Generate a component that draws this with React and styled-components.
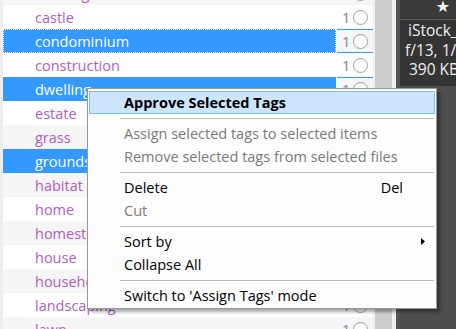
import React from 'react'
import styled, { createGlobalStyle } from 'styled-components'

const Global = createGlobalStyle`
  html, body { margin: 0; padding: 0; background: #4e4e4e; }
  body { font-family: "Open Sans", "Noto Sans", sans-serif; }
`

const Screen = styled.div`
  width: 456px;
  height: 329px;
  overflow: hidden;
  display: flex;
  position: relative;
  background: #4e4e4e;
`

const Edge = styled.div`
  width: 3px;
  background: #eeeeee;
`

const List = styled.div`
  width: 370px;
  margin-top: -19px;
  display: flex;
  flex-direction: column;
  background: #ffffff;
`

const Row = styled.div`
  display: flex;
  height: 24px;
  flex-shrink: 0;
  background: ${p => (p.$odd ? '#ffffff' : '#f5f5f5')};
`

const Name = styled.div`
  width: 333px;
  box-sizing: border-box;
  padding-left: 32px;
  display: flex;
  align-items: center;
  font-size: 14.5px;
  color: ${p => (p.$sel ? '#ffffff' : '#b65ac6')};
  background: ${p => (p.$sel ? '#3399ff' : 'transparent')};
  outline: ${p => (p.$focus ? '1px dotted #ffffff' : 'none')};
  outline-offset: -1px;
  white-space: nowrap;
`

const Count = styled.div`
  width: 36px;
  margin-left: 1px;
  box-sizing: border-box;
  display: flex;
  align-items: center;
  padding-left: 5px;
  gap: 3px;
  font-size: 14.5px;
  color: #7088a8;
  border-top: 1px solid ${p => (p.$sel ? '#3399ff' : 'transparent')};
  border-bottom: 1px solid ${p => (p.$sel ? '#3399ff' : 'transparent')};
`

const Circle = styled.span`
  width: 13px;
  height: 13px;
  border-radius: 50%;
  border: 1px solid #a0a0a0;
  background: #ffffff;
  flex-shrink: 0;
`

const Scroll = styled.div`
  display: flex;
`

const Gutter = styled.div`
  width: ${p => p.$w}px;
  background: ${p => p.$c};
`

const Panel = styled.div`
  width: 56px;
  display: flex;
  flex-direction: column;
  background: #4e4e4e;
  color: #eeeeee;
`

const Header = styled.div`
  height: 19px;
  background: #3a3a3a;
  border-bottom: 1px solid #575757;
  display: flex;
  justify-content: flex-end;
  align-items: flex-start;
  padding-right: 6px;
  font-family: "DejaVu Sans", sans-serif;
  font-size: 16px;
  line-height: 14px;
  color: #ffffff;
`

const Info = styled.div`
  height: 66px;
  background: #343434;
  padding: 1px 0 0 8px;
  box-sizing: border-box;
  font-size: 15.5px;
  line-height: 19.5px;
  white-space: nowrap;
  overflow: hidden;
`

const InfoLine = styled.div`
  margin-left: ${p => p.$x || 0}px;
`

const Menu = styled.div`
  position: absolute;
  left: 87px;
  top: 88px;
  width: 350px;
  box-sizing: border-box;
  border: 1px solid #979797;
  background: #fdfdfd;
  padding: 2px 1px 1px;
  box-shadow: 3px 3px 3px rgba(0, 0, 0, 0.35);
  font-size: 14.5px;
`

const Item = styled.div`
  height: 23px;
  box-sizing: border-box;
  display: flex;
  align-items: center;
  padding-left: ${p => (p.$hot ? 34 : 35)}px;
  color: ${p => (p.$off ? '#7a7a7a' : '#000000')};
  font-weight: ${p => (p.$bold ? 700 : 400)};
  background: ${p => (p.$hot ? '#cce4fc' : 'transparent')};
  border: ${p => (p.$hot ? '1px solid #86bbee' : 'none')};
  white-space: nowrap;
`

const Label = styled.span`
  flex: 1;
`

const Trail = styled.span`
  margin-right: ${p => p.$r}px;
  display: flex;
  align-items: center;
`

const Sep = styled.div`
  height: 8px;
  display: flex;
  align-items: center;
  padding-left: 31px;
  padding-right: 1px;
  &::after {
    content: '';
    flex: 1;
    height: 1px;
    background: #bdbdbd;
  }
`

const tags = [
  'building', 'castle', 'condominium', 'construction', 'dwelling', 'estate', 'grass',
  'grounds', 'habitat', 'home', 'homestead', 'house', 'household', 'landscaping', 'lawn'
]
const selected = ['condominium', 'dwelling', 'grounds']

const App = () => {
  return (
    <>
      <Global />
      <Screen>
        <Edge />
        <List>
          {tags.map((t, i) => {
            const sel = selected.includes(t)
            return (
              <Row key={t} $odd={i % 2 === 1}>
                <Name $sel={sel} $focus={t === 'condominium'}>{t}</Name>
                <Count $sel={sel}>1<Circle /></Count>
              </Row>
            )
          })}
        </List>
        <Scroll>
          <Gutter $w={2} $c="#f0f0f0" />
          <Gutter $w={17} $c="#cdcdcd" />
          <Gutter $w={4} $c="#f0f0f0" />
          <Gutter $w={4} $c="#555555" />
        </Scroll>
        <Panel>
          <Header>★</Header>
          <Info>
            <InfoLine $x={0}>iStock_000012345</InfoLine>
            <InfoLine $x={-3}>f/13, 1/250</InfoLine>
            <InfoLine $x={1}>390 KB, 2</InfoLine>
          </Info>
        </Panel>
        <Menu>
          <Item $hot $bold>Approve Selected Tags</Item>
          <Sep />
          <Item $off>Assign selected tags to selected items</Item>
          <Item $off>Remove selected tags from selected files</Item>
          <Sep />
          <Item><Label>Delete</Label><Trail $r={32}>Del</Trail></Item>
          <Item $off>Cut</Item>
          <Sep />
          <Item>
            <Label>Sort by</Label>
            <Trail $r={10}>
              <svg width="4" height="7" viewBox="0 0 4 7"><polygon points="0,0 4,3.5 0,7" fill="#000" /></svg>
            </Trail>
          </Item>
          <Item>Collapse All</Item>
          <Sep />
          <Item>Switch to 'Assign Tags' mode</Item>
        </Menu>
      </Screen>
    </>
  )
}

export default App
